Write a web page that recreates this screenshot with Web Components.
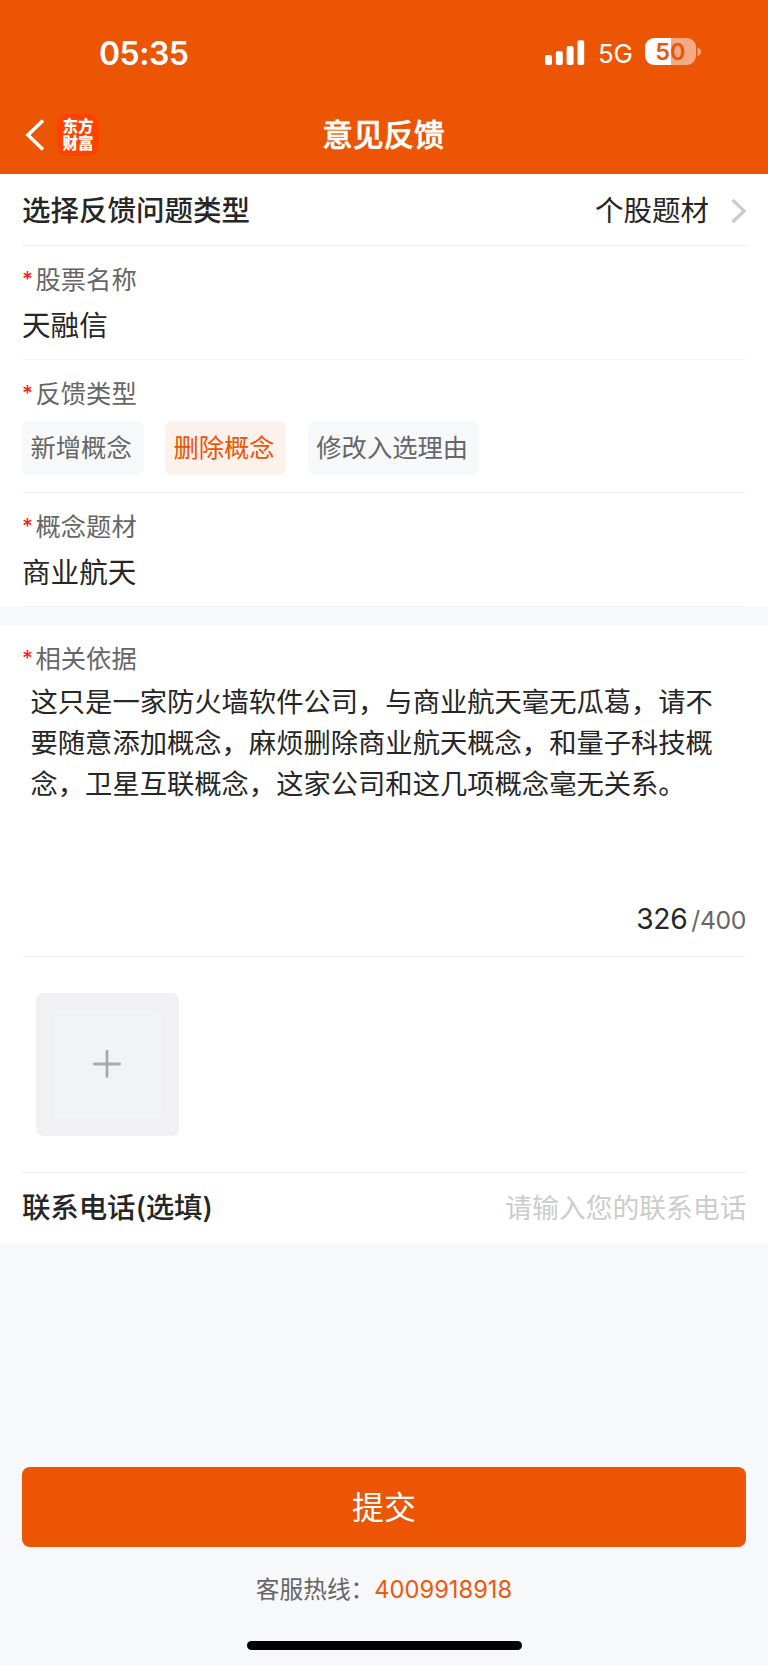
<!DOCTYPE html>
<html lang="zh-CN">
<head>
<meta charset="utf-8">
<title>意见反馈</title>
<style>
html,body{margin:0;padding:0}
body{font-family:Inter,"Noto Sans CJK SC",sans-serif;color:#262626;background:#f7f8fa}
</style>
</head>
<body>
<feedback-page></feedback-page>
<script>
function define(name, html){
  const t=document.createElement('template');
  t.innerHTML=html;
  customElements.define(name,class extends HTMLElement{
    constructor(){super();this.attachShadow({mode:'open'}).append(t.content.cloneNode(true));}
  });
}

define('status-bar',`<style>
:host{display:flex;height:104px;box-sizing:border-box;padding:0 66px 0 99px;align-items:center;color:#fff}
.time{font-size:32px;font-weight:600;line-height:40px;flex:1;letter-spacing:-.5px;margin-top:3px}
.bars{width:40px;height:25px;margin-right:13px}
.net{font-size:26px;line-height:30px;width:35px;margin:3px 12px 0 0;letter-spacing:-.4px}
.bat{display:grid;width:57px;height:27px;margin-top:-1px}
.bat>*{grid-area:1/1}
.pct{width:51px;text-align:center;font-size:23.5px;line-height:27px;font-weight:600;color:#eb5503}
</style>
<span class="time">05:35</span>
<svg class="bars" viewBox="0 0 40 25" fill="#fff"><rect x="0" y="15" width="7" height="10" rx="2"/><rect x="10.8" y="11" width="7" height="14" rx="2"/><rect x="21.6" y="6" width="7" height="19" rx="2"/><rect x="32.4" y="0.2" width="6.8" height="24.8" rx="2"/></svg>
<span class="net">5G</span>
<span class="bat"><svg width="57" height="27" viewBox="0 0 57 27"><path d="M9 0H26V27H9A9 9 0 0 1 0 18V9A9 9 0 0 1 9 0Z" fill="#fff"/><path d="M26 0H42A9 9 0 0 1 51 9V18A9 9 0 0 1 42 27H26ZM52.5 9.5Q56 11 56 13.7T52.5 18Z" fill="#f5aa82"/></svg><span class="pct">50</span></span>`);

define('app-logo',`<style>
:host{display:flex;align-items:center;justify-content:center;width:42px;height:42px;border-radius:9px;background:#ff4200;color:#fff}
span{width:33px;text-align:center;font:900 15.5px/17.5px "Noto Sans CJK SC",sans-serif;margin-top:-2px}
</style><span>东方财富</span>`);

define('nav-bar',`<style>
:host{display:grid;grid-template-columns:1fr auto 1fr;align-items:center;height:70px;padding:0 26px 0 25px;color:#fff}
.left{display:flex;align-items:center;gap:12px;margin-top:-8px}
h1{margin:-8px 0 0;font-size:30.6px;font-weight:500;line-height:40px;-webkit-text-stroke:.6px #fff}
</style>
<div class="left"><svg width="20" height="34" viewBox="0 0 20 34" fill="none" stroke="#fff" stroke-width="3.6"><path d="M18 2.5L3 17L18 31.5"/></svg><app-logo></app-logo></div><h1><slot></slot></h1>`);

define('link-row',`<style>
:host{display:flex;align-items:center;height:72px;box-sizing:border-box;margin:0 21px 0 22px;padding-top:2px;border-bottom:1px solid #eee;font-size:28.5px;line-height:40px}
b{font-weight:500;flex:1}
svg{margin-left:22px}
</style><b><slot name="label"></slot></b><slot></slot><svg width="16" height="26" viewBox="0 0 16 26" fill="none" stroke="#ccc" stroke-width="3.2"><path d="M1.5 2L13.2 13L1.5 24"/></svg>`);

define('required-label',`<style>
:host{display:flex;align-items:center;height:36px;font-size:25.3px;line-height:36px;color:#666}
i{font-style:normal;font-weight:500;color:#fa1e1e;width:13.5px;font-size:21px;line-height:36px;box-sizing:border-box}
</style><i>*</i><span><slot></slot></span>`);

define('form-field',`<style>
:host{display:block;box-sizing:border-box;height:var(--h,114px);margin:0 22px;padding-top:16px;border-bottom:1px solid #f3f3f4}
.v{font-size:28.6px;line-height:40px;margin-top:var(--v,7.5px)}
</style><required-label><slot name="label"></slot></required-label><div class="v"><slot></slot></div>`);

define('tag-chip',`<style>
:host{display:flex;box-sizing:border-box;height:54px;padding:0 8.5px;min-width:121.5px;border-radius:7px;background:#f7f8fa;color:#666;font-size:25.3px;line-height:54px;white-space:nowrap}
:host([selected]){background:#fdf1ec;color:#eb5503}
</style><slot></slot>`);

define('chip-group',`<style>:host{display:flex;gap:21.4px}</style><slot></slot>`);

define('reason-editor',`<style>
:host{display:block;box-sizing:border-box;height:332px;margin:0 22px;padding-top:16px;border-bottom:1px solid #f3f3f4}
p{margin:5px 0 0;padding-left:8.5px;font-size:27.3px;line-height:41px;height:195px;white-space:nowrap}
.count{display:flex;justify-content:flex-end;align-items:baseline;gap:4px;font-size:28.2px;line-height:40px;margin-top:22.5px;letter-spacing:-.3px}
small{font-size:24.8px;color:#666;letter-spacing:-.4px}
</style><required-label><slot name="label"></slot></required-label><p><slot></slot></p><div class="count"><span>326</span><small>/400</small></div>`);

define('image-upload',`<style>
:host{display:flex;box-sizing:border-box;height:216px;margin:0 22px;padding:36px 14px;border-bottom:1px solid #f0f0f1}
.box{display:flex;width:143px;height:143px;border-radius:7px;background:#f1f1f3;align-items:center;justify-content:center}
.in{display:flex;width:107px;height:107px;border-radius:4px;background:#f1f3f5;align-items:center;justify-content:center}
svg{margin:-1px 0 0 -1px}
</style><div class="box"><div class="in"><svg width="28" height="28" viewBox="0 0 28 28" stroke="#a9a9aa" stroke-width="2.8" stroke-linecap="round"><path d="M14 1.4V26.6M1.4 14H26.6"/></svg></div></div>`);

define('phone-row',`<style>
:host{display:flex;align-items:center;justify-content:space-between;height:70px;padding:0 22px;font-size:28.5px;line-height:40px}
b{font-weight:500;letter-spacing:-.15px}
span{font-size:26.8px;color:#ccc;margin-right:-.5px}
</style><b><slot></slot></b><span>请输入您的联系电话</span>`);

define('submit-button',`<style>
:host{display:flex;justify-content:center;height:80.5px;margin:0 22px;border-radius:8px;background:#eb5503;color:#fff;font-size:32px;line-height:82px}
</style><slot></slot>`);

define('hot-line',`<style>
:host{display:flex;justify-content:center;font-size:23.7px;line-height:36px;color:#666;white-space:nowrap}
a{color:#f0560c}
</style><span><slot></slot></span><a>4009918918</a>`);

define('feedback-page',`<style>
:host{display:flex;flex-direction:column;width:768px;height:1665px;overflow:hidden}
header{background:#eb5503;height:174.4px}
section{background:#fff}
.first{height:432.6px}
.gap{height:18px}
.two{height:618px}
submit-button{margin-top:224px}
hot-line{margin-top:25px}
.home{width:275px;height:9px;border-radius:5px;background:#000;margin:32.5px auto 0}
</style>
<header><status-bar></status-bar><nav-bar>意见反馈</nav-bar></header>
<section class="first">
<link-row><span slot="label">选择反馈问题类型</span>个股题材</link-row>
<form-field><span slot="label">股票名称</span>天融信</form-field>
<form-field style="--h:133px;--v:9px"><span slot="label">反馈类型</span><chip-group><tag-chip>新增概念</tag-chip><tag-chip selected>删除概念</tag-chip><tag-chip style="min-width:171px">修改入选理由</tag-chip></chip-group></form-field>
<form-field><span slot="label">概念题材</span>商业航天</form-field>
</section>
<div class="gap"></div>
<section class="two">
<reason-editor><span slot="label">相关依据</span>这只是一家防火墙软件公司，与商业航天毫无瓜葛，请不<br>要随意添加概念，麻烦删除商业航天概念，和量子科技概<br>念，卫星互联概念，这家公司和这几项概念毫无关系。</reason-editor>
<image-upload></image-upload>
<phone-row>联系电话(选填)</phone-row>
</section>
<submit-button>提交</submit-button>
<hot-line>客服热线：</hot-line>
<div class="home"></div>`);
</script>
</body>
</html>
